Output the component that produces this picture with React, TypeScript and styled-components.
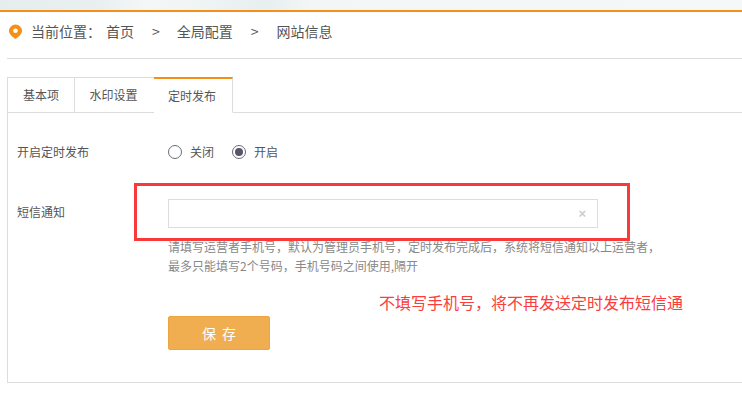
import React from 'react';
import styled, { createGlobalStyle } from 'styled-components';

const GlobalStyle = createGlobalStyle`
  html, body {
    margin: 0;
    padding: 0;
    background: #fff;
    overflow: hidden;
  }
  body {
    font-family: "Noto Sans CJK SC", "Liberation Sans", sans-serif;
    font-size: 12px;
    color: #555;
  }
`;

const Page = styled.div`
  position: relative;
  width: 742px;
  height: 407px;
`;

const TopStrip = styled.div`
  height: 10px;
  background: linear-gradient(90deg, #e6edee 0%, #eaf0f1 14%, #f4f7f8 20%, #e8eff0 36%, #f3f6f7 42%, #f5f8f9 100%);
  border-bottom: 2px solid #f39015;
`;

const Breadcrumb = styled.nav`
  display: flex;
  align-items: center;
  box-sizing: border-box;
  height: 47px;
  margin-left: 7px;
  padding-bottom: 8px;
  border-bottom: 1px solid #ddd;
  color: #555;
  font-size: 14px;
`;

const Pin = styled.svg`
  width: 15px;
  height: 15px;
  margin: 0 8px 0 1px;
`;

const Crumb = styled.span<{ $gap: number }>`
  margin-right: ${p => p.$gap}px;
`;

const TabBar = styled.div`
  display: flex;
  margin: 18px 0 0 7px;
  height: 36px;
  border-bottom: 1px solid #ddd;
  box-sizing: border-box;
`;

const Tab = styled.div<{ $active?: boolean; $width: number; $inset?: number }>`
  display: flex;
  align-items: center;
  justify-content: center;
  box-sizing: border-box;
  width: ${p => p.$width}px;
  height: 36px;
  padding: 0 ${p => p.$inset ?? 0}px ${p => (p.$active ? 0 : 2)}px 0;
  font-size: 12px;
  color: #555;
  background: #fff;
  border: 1px solid #ddd;
  border-left-width: ${p => (p.$active ? 0 : 1)}px;
  border-right-width: ${p => (p.$active ? 1 : 0)}px;
  border-bottom-color: ${p => (p.$active ? '#fff' : '#ddd')};
  border-top: ${p => (p.$active ? '2px solid #f39015' : '1px solid #ddd')};
`;

const Panel = styled.div`
  margin-left: 7px;
  height: 270px;
  box-sizing: border-box;
  border-left: 1px solid #ddd;
  border-bottom: 1px solid #ddd;
  padding: 24px 0 0 9px;
`;

const Row = styled.div`
  display: flex;
  align-items: center;
`;

const Label = styled.div<{ $lift?: number }>`
  width: 151px;
  padding-bottom: ${p => p.$lift ?? 0}px;
  font-size: 12px;
  color: #555;
`;

const RadioGroup = styled(Row)`
  height: 28px;
`;

const RadioOption = styled.label`
  display: flex;
  align-items: center;
  margin-right: 18px;
  color: #555;
  font-size: 12px;
`;

const RadioCircle = styled.span<{ $checked?: boolean }>`
  display: flex;
  align-items: center;
  justify-content: center;
  box-sizing: border-box;
  width: 14px;
  height: 14px;
  margin: 2px 8px 0 0;
  border: 1px solid #6b6b76;
  border-radius: 50%;
  background: #fff;
  &::after {
    content: '';
    display: ${p => (p.$checked ? 'block' : 'none')};
    width: 8px;
    height: 8px;
    border-radius: 50%;
    background: #565664;
  }
`;

const PhoneRow = styled(Row)`
  margin-top: 34px;
`;

const PhoneBox = styled.div`
  display: flex;
  align-items: center;
  justify-content: flex-end;
  box-sizing: border-box;
  width: 430px;
  height: 29px;
  padding: 0 11px 1px 0;
  border: 1px solid #ddd;
  background: #fff;
  color: #ccc;
  font-family: "Liberation Sans", sans-serif;
  font-size: 13px;
  font-weight: 700;
`;

const Hint = styled.p`
  margin: 9px 0 0 151px;
  color: #888;
  font-size: 12px;
  line-height: 19px;
`;

const SaveButton = styled.button`
  display: block;
  box-sizing: border-box;
  width: 102px;
  height: 34px;
  margin: 41px 0 0 151px;
  padding: 0 0 1px;
  border: 1px solid #eca53f;
  border-radius: 2px;
  background: #f0ae50;
  color: #fff;
  font-family: inherit;
  font-size: 14px;
  letter-spacing: 6px;
  text-indent: 6px;
`;

const RedFrame = styled.div`
  position: absolute;
  left: 134px;
  top: 183px;
  width: 496px;
  height: 58px;
  box-sizing: border-box;
  border: 3px solid #f83a3a;
`;

const RedNote = styled.div`
  position: absolute;
  left: 379px;
  top: 292px;
  color: #fb3d3d;
  font-size: 16px;
  line-height: 20px;
  white-space: nowrap;
`;

export default function App() {
  return (
    <Page>
      <GlobalStyle />
      <TopStrip />
      <Breadcrumb>
        <Pin viewBox="0 0 15 15">
          <path
            fillRule="evenodd"
            fill="#f39015"
            d="M7.5 0.5a6.5 6.5 0 0 1 6.5 6.5c0 3-3.6 6-6.5 8c-2.900-2-6.500-5-6.500-8a6.500 6.500 0 0 1 6.500-6.500zM7.500 4.500a2.300 2.300 0 1 0 0 4.600a2.300 2.300 0 0 0 0-4.600z"
          />
        </Pin>
        <Crumb $gap={5}>当前位置：</Crumb>
        <Crumb $gap={18}>首页</Crumb>
        <Crumb $gap={17}>&gt;</Crumb>
        <Crumb $gap={18}>全局配置</Crumb>
        <Crumb $gap={18}>&gt;</Crumb>
        <Crumb $gap={0}>网站信息</Crumb>
      </Breadcrumb>
      <TabBar>
        <Tab $width={67}>基本项</Tab>
        <Tab $width={80} $inset={2}>水印设置</Tab>
        <Tab $width={79} $inset={2} $active>定时发布</Tab>
      </TabBar>
      <Panel>
        <RadioGroup>
          <Label>开启定时发布</Label>
          <RadioOption><RadioCircle />关闭</RadioOption>
          <RadioOption><RadioCircle $checked />开启</RadioOption>
        </RadioGroup>
        <PhoneRow>
          <Label $lift={4}>短信通知</Label>
          <PhoneBox>×</PhoneBox>
        </PhoneRow>
        <Hint>
          请填写运营者手机号，默认为管理员手机号，定时发布完成后，系统将短信通知以上运营者，
          <br />
          最多只能填写2个号码，手机号码之间使用,隔开
        </Hint>
        <SaveButton>保存</SaveButton>
      </Panel>
      <RedFrame />
      <RedNote>不填写手机号，将不再发送定时发布短信通</RedNote>
    </Page>
  );
}
